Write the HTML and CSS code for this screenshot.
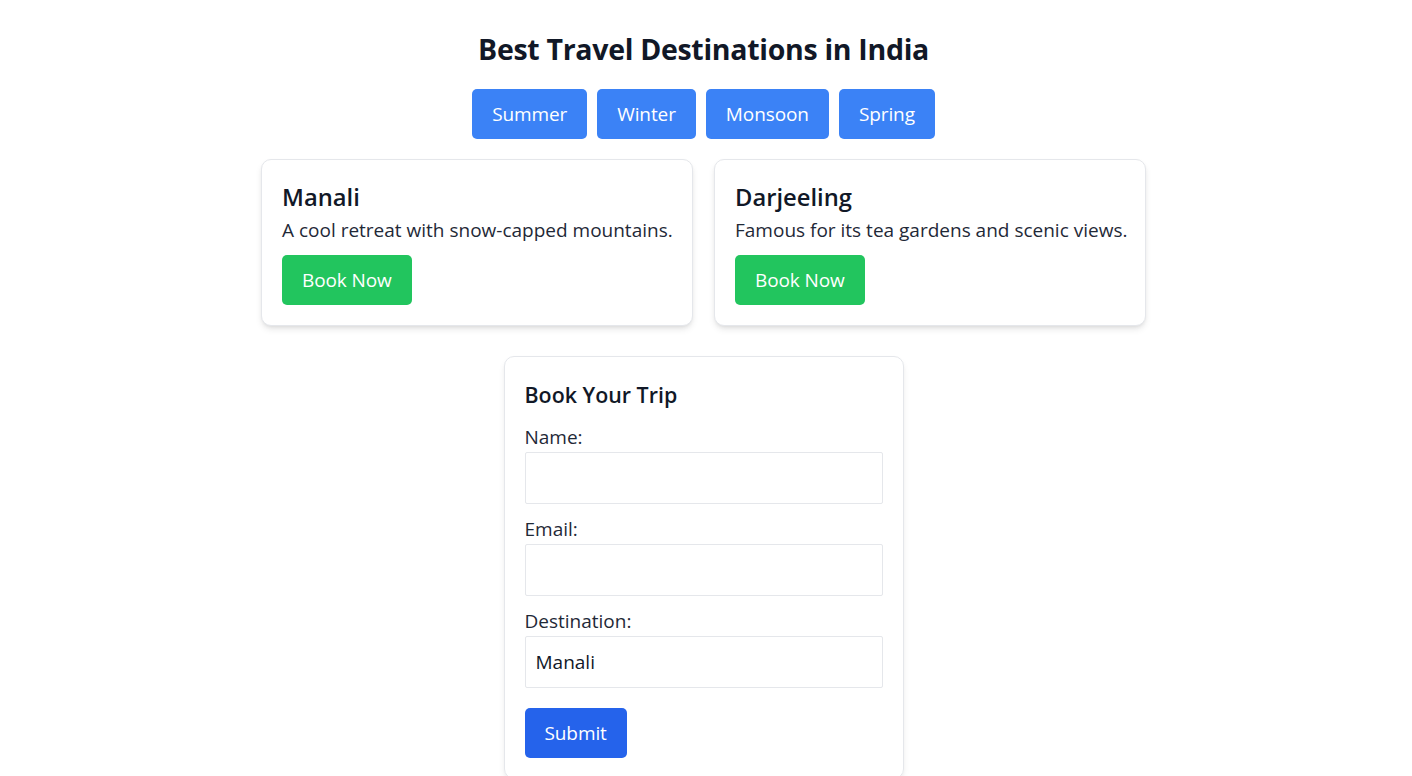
FILE: index.html
```html
<!DOCTYPE html>
<html lang="en">
<head>
<meta charset="utf-8">
<title>Best Travel Destinations in India</title>
<link rel="stylesheet" href="styles.css">
</head>
<body>
<div class="page">
  <h1 class="title">Best Travel Destinations in India</h1>
  <div class="seasons">
    <button class="season-btn">Summer</button>
    <button class="season-btn">Winter</button>
    <button class="season-btn">Monsoon</button>
    <button class="season-btn">Spring</button>
  </div>
  <div class="cards">
    <div class="card">
      <h2 class="card-title">Manali</h2>
      <p class="card-desc">A cool retreat with snow-capped mountains.</p>
      <button class="book-btn">Book Now</button>
    </div>
    <div class="card">
      <h2 class="card-title">Darjeeling</h2>
      <p class="card-desc">Famous for its tea gardens and scenic views.</p>
      <button class="book-btn">Book Now</button>
    </div>
  </div>
  <form class="form-card">
    <h3 class="form-title">Book Your Trip</h3>
    <label class="field-label" for="name">Name:</label>
    <input class="field" id="name" type="text">
    <label class="field-label" for="email">Email:</label>
    <input class="field" id="email" type="email">
    <label class="field-label" for="dest">Destination:</label>
    <input class="field" id="dest" type="text" value="Manali">
    <button class="submit-btn" type="button">Submit</button>
  </form>
</div>
</body>
</html>
```

FILE: styles.css
```css
* { box-sizing: border-box; }
html, body { margin: 0; padding: 0; background: #ffffff; }
body {
  font-family: "Open Sans", "Noto Sans", sans-serif;
  font-size: 19px;
  line-height: 30px;
  letter-spacing: 0;
  color: #111827;
}
.page {
  width: 1407px;
  display: flex;
  flex-direction: column;
  align-items: center;
  padding-top: 29px;
}
.title {
  margin: 0;
  font-size: 28.5px;
  line-height: 40px;
  font-weight: 700;
  letter-spacing: -0.3px;
  color: #111827;
}
.seasons {
  display: flex;
  gap: 10px;
  margin-top: 20px;
}
button {
  font-family: inherit;
  font-size: 19px;
  line-height: 30px;
  letter-spacing: -0.1px;
  border: none;
  color: #ffffff;
  padding: 10px 20px;
  border-radius: 5px;
  cursor: pointer;
}
.season-btn { background: #3b82f6; }
.cards {
  display: grid;
  grid-template-columns: 432px 432px;
  gap: 21px;
  margin-top: 20px;
}
.card {
  border: 1px solid #e5e7eb;
  border-radius: 10px;
  padding: 20px;
  box-shadow: 0 4px 7px -1px rgba(0,0,0,0.1), 0 2px 4px -2px rgba(0,0,0,0.1);
  background: #fff;
}
.card-title {
  margin: 0;
  font-size: 23.75px;
  line-height: 35px;
  font-weight: 600;
}
.card-desc {
  margin: 0;
  color: #1f2937;
  white-space: nowrap;
}
.book-btn {
  margin-top: 10px;
  background: #22c55e;
}
.form-card {
  width: 400px;
  margin-top: 30px;
  border: 1px solid #e5e7eb;
  border-radius: 10px;
  padding: 20px;
  box-shadow: 0 4px 7px -1px rgba(0,0,0,0.08), 0 2px 4px -2px rgba(0,0,0,0.08);
  display: flex;
  flex-direction: column;
  align-items: flex-start;
}
.form-title {
  margin: 0 0 10px 0;
  font-size: 21.4px;
  line-height: 35px;
  font-weight: 600;
}
.field-label {
  display: block;
  color: #1f2937;
}
.field {
  width: 100%;
  height: 52px;
  border: 1px solid #e5e7eb;
  border-radius: 2px;
  padding: 10px;
  font-family: inherit;
  font-size: 19px;
  color: #111827;
  margin-bottom: 10px;
  outline: none;
}
.field:last-of-type { margin-bottom: 20px; }
.submit-btn { background: #2563eb; }
```
